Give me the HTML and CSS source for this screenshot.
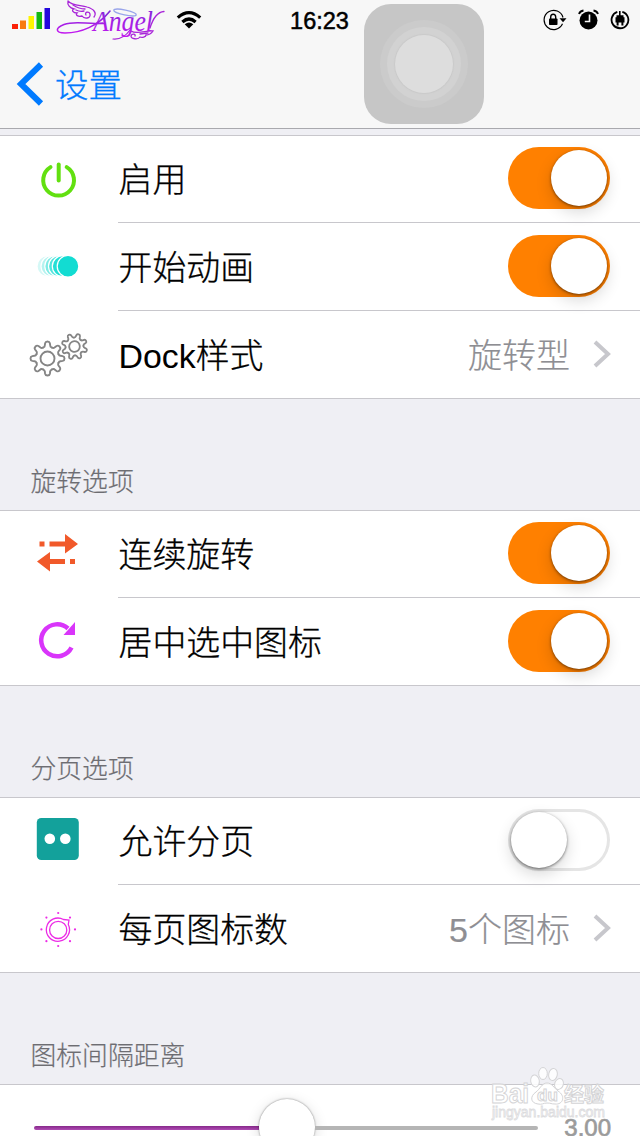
FILE: index.html
```html
<!DOCTYPE html>
<html lang="zh-Hans">
<head>
  <meta charset="UTF-8" />
  <meta name="viewport" content="width=device-width, initial-scale=1.0" />
  <title>设置</title>
  <link rel="stylesheet" href="styles.css">
</head>
<body>
  <header class="topbar">
    <div class="status">
      <div class="status-left">
        <svg class="signal" width="38" height="22" viewBox="0 0 38 22">
          <rect x="0" y="16" width="6" height="5" fill="#fb2108"/>
          <rect x="8" y="12.500" width="6" height="8.500" fill="#f87a10"/>
          <rect x="16.500" y="8" width="5.500" height="13" fill="#fdf500"/>
          <rect x="24.500" y="4" width="5.500" height="17" fill="#12b812"/>
          <rect x="32.500" y="0" width="5.500" height="21" fill="#2408dc"/>
        </svg>
        <svg class="carrier" width="112" height="40" viewBox="0 0 112 40">
          <defs>
            <linearGradient id="purple" x1="0" y1="0" x2="0" y2="1">
              <stop offset="0" stop-color="#7a2bd6"/>
              <stop offset="1" stop-color="#c318f0"/>
            </linearGradient>
          </defs>
          <g fill="none" stroke="#a824d8" stroke-width="1.300" stroke-linecap="round">
            <!-- 左翼 -->
            <path d="M12 1C16 6 25 5 31 7C38 9 41 13 38 17M12 1C11 5 14 8 18 9C15 10 17 13 21 13C19 15 22 17 26 16C28 19 35 19 34 14C33 11 28 12 30 15"/>
            <path d="M17 5Q23 9 29 9M20 10Q24 12 28 11"/>
            <!-- 右翼 -->
            <path d="M75 31C81 35 91 30 97 31C95 34 93 35 90 35C90 37 86 38 84 37C82 40 75 39 75 36C76 33 80 34 79 36M84 34L92 33"/>
            <path d="M54 11C42 26 25 33 9 33C-1 33 -1 28 8 24.500C20 20 33 25 47 23" stroke="url(#purple)" stroke-width="1.600"/>
            <path d="M94 28Q99 12 108 11.500" stroke-width="1.300"/>
            <path d="M74 30Q67 40 57 39" stroke-width="1.200"/>
          </g>
          <ellipse cx="69" cy="12.500" rx="11.500" ry="2.500" transform="rotate(12 69 12.500)" fill="none" stroke="#98a4ea" stroke-width="1.300"/>
          <text x="37" y="31" textLength="60" lengthAdjust="spacingAndGlyphs" class="carrier-name">Angel</text>
        </svg>
        <svg class="wifi" width="26" height="20" viewBox="0 0 26 20">
          <g fill="none" stroke="#000" stroke-width="3.200">
            <path d="M1.800 7.600Q13 -2.400 24.200 7.600"/>
            <path d="M6.400 12Q13 6 19.600 12"/>
          </g>
          <path d="M8.700 14.300Q13 10.500 17.300 14.300L13 18.600Z"/>
        </svg>
      </div>
      <span class="time">16:23</span>
      <div class="status-right">
        <svg width="24" height="22" viewBox="0 0 24 22">
          <path d="M19.500 14.800A9.600 9.600 0 1 1 20 8.500" fill="none" stroke="#000" stroke-width="1.200"/>
          <path d="M16.500 9.200H23.500L20 13.200Z"/>
          <rect x="6" y="9.500" width="8.500" height="6.500" rx=".8"/>
          <path d="M7.700 10V8a2.500 2.800 0 0 1 5 0v2" fill="none" stroke="#000" stroke-width="1.400"/>
        </svg>
        <svg width="21" height="22" viewBox="0 0 21 22">
          <circle cx="10.500" cy="11.500" r="9"/>
          <path d="M1 5Q2 2 5.500 1.500M20 5Q19 2 15.500 1.500" fill="none" stroke="#000" stroke-width="1.800"/>
          <path d="M11.500 5.500V12.500H6.800" fill="none" stroke="#f7f7f7" stroke-width="1.600"/>
        </svg>
        <svg width="20" height="22" viewBox="0 0 20 22">
          <path d="M12.300 2.800A8.400 8.400 0 1 1 7.300 2.900" fill="none" stroke="#000" stroke-width="1.800"/>
          <path d="M9 2h1.600v4.500H9zM6.500 6.200h7v2h1v5.300h-9V8.200h1zM6.600 13h2v3.500h-2zM11.400 13h2v3.500h-2z"/>
        </svg>
      </div>
    </div>
    <a class="back">
      <svg width="28" height="44" viewBox="0 0 28 44">
        <path d="M25 2.500L5 22L25 41.500" fill="none" stroke="#007aff" stroke-width="6"/>
      </svg>
      <span>设置</span>
    </a>
  </header>

  <main class="settings">
    <section class="group">
      <div class="row">
        <svg class="icon" viewBox="0 0 60 60">
          <g fill="none" stroke="#62e010" stroke-width="4" stroke-linecap="round">
            <path d="M22.500 18.100A15.400 15.400 0 1 0 38.700 18.100"/>
            <path d="M30.700 15.500V31.500"/>
          </g>
        </svg>
        <span class="label">启用</span>
        <span class="switch on"></span>
      </div>
      <div class="row">
        <svg class="icon" viewBox="0 0 60 60">
          <g fill="#12dcd2" stroke="#fff" stroke-width="1.200">
            <circle cx="19.500" cy="29.200" r="10.500" fill="#d5f8f6"/>
            <circle cx="23.500" cy="29.200" r="10.500" fill="#b4f3ef"/>
            <circle cx="27.300" cy="29.200" r="10.500" fill="#80ebe5"/>
            <circle cx="31" cy="29.200" r="10.500" fill="#50e5dd"/>
            <circle cx="34.800" cy="29.200" r="10.500" fill="#24dfd6"/>
            <circle cx="40" cy="29.200" r="10.800"/>
          </g>
        </svg>
        <span class="label">开始动画</span>
        <span class="switch on"></span>
      </div>
      <div class="row">
        <svg class="icon" viewBox="0 0 60 60">
          <defs>
            <path id="tooth" d="M10.900 -4.500Q11.800 -2.500 13.200 -2.700L15.200 -2.400Q17 -2 17 0Q17 2 15.200 2.400L13.200 2.700Q11.800 2.500 10.900 4.500"/>
            <g id="gear">
              <use href="#tooth"/>
              <use href="#tooth" transform="rotate(45)"/>
              <use href="#tooth" transform="rotate(90)"/>
              <use href="#tooth" transform="rotate(135)"/>
              <use href="#tooth" transform="rotate(180)"/>
              <use href="#tooth" transform="rotate(225)"/>
              <use href="#tooth" transform="rotate(270)"/>
              <use href="#tooth" transform="rotate(315)"/>
              <circle r="7"/>
            </g>
          </defs>
          <g fill="none" stroke="#858585" stroke-linecap="round">
            <use href="#gear" transform="translate(19.500 33.500)" stroke-width="1.900"/>
            <use href="#gear" transform="translate(46.500 21.500) rotate(19) scale(.76)" stroke-width="2.400"/>
          </g>
        </svg>
        <span class="label"><span class="latin">Dock</span>样式</span>
        <span class="value">旋转型</span>
        <svg class="chevron" viewBox="0 0 18 28"><path d="M2 2L15 14L2 26"/></svg>
      </div>
    </section>

    <h2 class="title">旋转选项</h2>
    <section class="group">
      <div class="row">
        <svg class="icon" viewBox="0 0 60 60" fill="#f1592a">
          <path d="M11.500 17.500h5v5h-5zM21.500 17.500H37V10L50 20L37 29.500V22.500H21.500z"/>
          <path d="M47 35h-5v5h5zM37 35H22V28L9 37.500L22 47.500V40H37z"/>
        </svg>
        <span class="label">连续旋转</span>
        <span class="switch on"></span>
      </div>
      <div class="row">
        <svg class="icon" viewBox="0 0 60 60">
          <path d="M43.500 35.500A16 16 0 1 1 40 16.500" fill="none" stroke="#d935fa" stroke-width="4.500"/>
          <path d="M47 10V23H35.500Z" fill="#d935fa"/>
        </svg>
        <span class="label">居中选中图标</span>
        <span class="switch on"></span>
      </div>
    </section>

    <h2 class="title">分页选项</h2>
    <section class="group">
      <div class="row">
        <svg class="icon" viewBox="0 0 60 60">
          <rect x="8.800" y="7" width="42" height="42" rx="4.500" fill="#13a19b"/>
          <circle cx="21.800" cy="27.800" r="5.300" fill="#fff"/>
          <circle cx="37.300" cy="27.800" r="5.300" fill="#fff"/>
        </svg>
        <span class="label">允许分页</span>
        <span class="switch"></span>
      </div>
      <div class="row">
        <svg class="icon" viewBox="0 0 60 60">
          <g fill="none" stroke="#ec2be6" stroke-width="1.300">
            <path d="M41 21L40.300 25.500A11.600 11.600 0 1 1 35.500 20.500Z"/>
            <circle cx="30.200" cy="30.900" r="8.600"/>
          </g>
          <g fill="#ec2be6">
            <circle cx="30.200" cy="14" r="1.100"/>
            <circle cx="42" cy="18.600" r="1.100"/>
            <circle cx="47" cy="30.400" r="1.100"/>
            <circle cx="42" cy="42.200" r="1.100"/>
            <circle cx="30.200" cy="47" r="1.100"/>
            <circle cx="18.400" cy="42.200" r="1.100"/>
            <circle cx="13.400" cy="30.400" r="1.100"/>
            <circle cx="18.400" cy="18.600" r="1.100"/>
          </g>
        </svg>
        <span class="label">每页图标数</span>
        <span class="value">5个图标</span>
        <svg class="chevron" viewBox="0 0 18 28"><path d="M2 2L15 14L2 26"/></svg>
      </div>
    </section>

    <h2 class="title">图标间隔距离</h2>
    <section class="group">
      <div class="slider-row">
        <div class="track">
          <div class="fill"></div>
          <div class="knob"></div>
          <div class="rest"></div>
        </div>
        <span class="number">3.00</span>
      </div>
    </section>
  </main>

  <div class="assistive">
    <div class="ring"><div class="ring-mid"><div class="ring-core"></div></div></div>
  </div>

  <svg class="watermark" width="126" height="60" viewBox="0 0 126 60">
    <g class="paw">
      <ellipse cx="51" cy="20" rx="4.300" ry="6" transform="rotate(-10 51 20)"/>
      <ellipse cx="59" cy="12.500" rx="4.300" ry="6"/>
      <ellipse cx="69" cy="13.500" rx="4.300" ry="6" transform="rotate(12 69 13.500)"/>
      <ellipse cx="75" cy="23" rx="4.300" ry="5.500" transform="rotate(20 75 23)"/>
      <path d="M63 22C68 22 70 27 74 30C82 35 79 44 71 43C67 43 67 42 63 42C59 42 58 44 54 43C46 42 46 35 52 31C56 28 58 22 63 22Z"/>
    </g>
    <text x="7" y="42" class="wm-big" textLength="38" lengthAdjust="spacingAndGlyphs">Bai</text>
    <text x="53" y="40" class="wm-du">du</text>
    <text x="80" y="41" class="wm-cjk">经验</text>
    <text x="8" y="56" class="wm-url" textLength="113" lengthAdjust="spacingAndGlyphs">jingyan.baidu.com</text>
  </svg>
</body>
</html>
```
FILE: styles.css
```css
* {
  box-sizing: border-box;
}
body {
  position: relative;
  margin: 0;
  width: 640px;
  height: 1136px;
  overflow: hidden;
  background-color: #efeff4;
  color: #000;
  font-family: "Liberation Sans", "Noto Sans CJK SC", sans-serif;
  font-weight: 300;
}
svg {
  display: block;
  flex: none;
}
.topbar {
  height: 129px;
  background-color: #f7f7f7;
  border-bottom: 1px solid #a9a9ae;
}
.status {
  display: grid;
  grid-template-columns: 1fr auto 1fr;
  height: 40px;
}
.status-left {
  display: flex;
  padding-left: 12px;
}
.signal {
  margin-top: 8px;
}
.carrier {
  margin-left: 6px;
}
.carrier-name {
  font-family: "Liberation Serif", serif;
  font-style: italic;
  font-size: 29px;
  fill: url(#purple);
}
.wifi {
  margin: 10px 0 0 8px;
}
.time {
  margin-left: -1px;
  font-size: 23.5px;
  line-height: 42px;
  -webkit-text-stroke: 0.5px #000;
}
.status-right {
  display: flex;
  justify-content: flex-end;
  gap: 11px;
  padding: 9px 10px 0 0;
}
.back {
  display: flex;
  align-items: center;
  gap: 11px;
  height: 88px;
  padding-left: 16px;
  color: #007aff;
  font-size: 33.5px;
  line-height: 48px;
  -webkit-text-stroke: 0.3px #007aff;
}
.back span {
  margin-top: 3px;
}
.settings {
  padding-top: 6px;
}
.group {
  background-color: #fff;
  border-top: 1px solid #c8c7cc;
  border-bottom: 1px solid #c8c7cc;
}
.row {
  position: relative;
  display: flex;
  align-items: flex-end;
  height: 88px;
  padding: 0 30px 14px 28px;
}
.row:first-child {
  height: 87px;
}
.row:last-child {
  height: 87px;
  padding-bottom: 13px;
}
.row:not(:last-child)::after {
  content: "";
  position: absolute;
  left: 118px;
  right: 0;
  bottom: 0;
  height: 1px;
  background-color: #c8c7cc;
}
.icon {
  width: 60px;
  height: 60px;
}
.label {
  flex: 1;
  margin-left: 30.5px;
  font-size: 33.9px;
  line-height: 58px;
  -webkit-text-stroke: 0.3px #000;
}
.latin {
  -webkit-text-stroke: 0;
}
.value {
  color: #8e8e93;
  font-size: 34px;
  line-height: 58px;
  -webkit-text-stroke: 0.2px #8e8e93;
}
.chevron {
  width: 18px;
  height: 28px;
  margin: 0 -1px 17px 23px;
}
.chevron path {
  fill: none;
  stroke: #c7c7cc;
  stroke-width: 4;
}
.switch {
  display: flex;
  width: 102px;
  height: 62px;
  padding: 3px;
  border-radius: 31px;
  background-color: #fff;
  box-shadow: inset 0 0 0 3px #e5e5e5;
}
.switch::before {
  content: "";
  width: 56px;
  height: 56px;
  border-radius: 50%;
  background-color: #fff;
  box-shadow: 0 1px 3px rgba(0, 0, 0, 0.5), 0 6px 16px rgba(0, 0, 0, 0.16);
}
.switch.on {
  justify-content: flex-end;
  background-color: #ff8000;
  box-shadow: none;
}
.title {
  height: 111px;
  margin: 0;
  padding: 65px 30px 0 30.5px;
  color: #6d6d72;
  font-size: 25.8px;
  font-weight: 300;
  line-height: 36px;
  -webkit-text-stroke: 0.2px #6d6d72;
}
.slider-row {
  display: flex;
  align-items: center;
  justify-content: space-between;
  height: 86px;
  padding: 0 29px 0 34px;
}
.track {
  display: flex;
  align-items: center;
  width: 504px;
}
.fill {
  width: 225px;
  height: 4px;
  border-radius: 2px 0 0 2px;
  background: linear-gradient(#86298a, #b04bb4);
}
.knob {
  width: 56px;
  height: 56px;
  margin-top: -3px;
  border-radius: 50%;
  background-color: #fff;
  box-shadow: 0 0 2px rgba(0, 0, 0, 0.5), 0 3px 14px rgba(0, 0, 0, 0.15);
}
.rest {
  flex: 1;
  height: 4px;
  border-radius: 0 2px 2px 0;
  background-color: #b5b5b5;
}
.number {
  color: #9b9b9b;
  font-size: 24px;
  -webkit-text-stroke: 0.7px #9b9b9b;
}
.assistive {
  position: absolute;
  left: 364px;
  top: 4px;
  display: grid;
  place-items: center;
  width: 120px;
  height: 120px;
  border-radius: 27px;
  background-color: #c6c6c6;
}
.ring,
.ring-mid {
  display: grid;
  place-items: center;
  width: 88px;
  height: 88px;
  border-radius: 50%;
  background-color: #cbcbcb;
}
.ring-mid {
  width: 74px;
  height: 74px;
  background-color: #d2d2d2;
}
.ring-core {
  width: 58px;
  height: 58px;
  border-radius: 50%;
  background-color: #dddddd;
  box-shadow: 0 0 1px 1px #cacaca;
}
.watermark {
  position: absolute;
  left: 484px;
  top: 1061px;
}
.watermark text,
.paw {
  fill: #fff;
  fill-opacity: 0.85;
  stroke: #d4d4d6;
  stroke-width: 1px;
}
.wm-big {
  font-size: 27px;
  font-weight: bold;
}
.wm-du {
  font-size: 17px;
  font-weight: bold;
}
.wm-cjk {
  font-size: 20px;
  font-weight: bold;
}
.watermark .wm-url {
  font-size: 14px;
  stroke: #dcdcde;
  stroke-width: 0.8px;
}
```
